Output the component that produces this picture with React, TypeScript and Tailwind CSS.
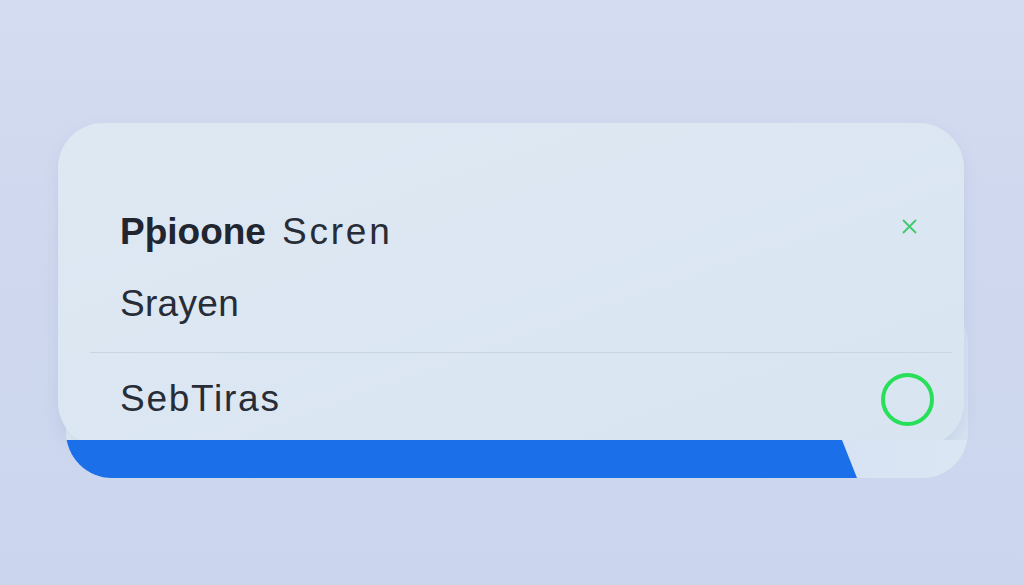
export default function App() {
  return (
    <div className="min-h-[585px] w-[1024px] bg-gradient-to-b from-[#d4dcf1] via-[#ced7ee] to-[#cbd6ee] pl-[58px] pt-[123px] font-['Liberation_Sans',Arial,sans-serif] text-[#272c36]">
      <div className="grid h-[355px] w-[910px]">
        {/* back layer with blue strip */}
        <div className="col-start-1 row-start-1 ml-[8px] flex h-[180px] w-[902px] flex-col justify-end self-end overflow-hidden rounded-[46px] bg-gradient-to-r from-[#e2ebf5] via-[#dbe6f2] to-[#d6e2f1]">
          <div className="relative h-[38px] w-full">
            <div className="h-full w-full bg-gradient-to-r from-[#bfd3ef] to-[#dbe6f3]" />
            <div className="absolute inset-0 bg-[#1b6fe9] [clip-path:polygon(0_0,776px_0,791px_100%,0_100%)]" />
          </div>
        </div>

        {/* front card */}
        <div className="col-start-1 row-start-1 flex h-[324px] w-[906px] flex-col self-start rounded-[45px] bg-gradient-to-br from-[#dee8f3] to-[#d8e5f1] pt-[87px] pb-[26px] shadow-[0_6px_14px_rgba(150,170,205,0.25)]">
          <div className="flex h-[44px] items-center justify-between pl-[62px] pr-[47px]">
            <div className="text-[37px] leading-[44px]">
              <span className="font-bold text-[#20252f]">Pþioone</span>
              <span className="ml-[16px] tracking-[2.8px]">Scren</span>
            </div>
            <svg width="15" height="15" viewBox="0 0 15 15" className="-mt-[12px]">
              <path d="M1.5 1.5 L13.5 13.5 M13.5 1.5 L1.5 13.5" stroke="#3ecb6c" strokeWidth="1.8" strokeLinecap="round" />
            </svg>
          </div>
          <div className="mt-[28px] h-[44px] pl-[62px] text-[37px] leading-[44px] tracking-[0.3px]">Srayen</div>
          <div className="ml-[32px] mt-[26px] h-px w-[862px] bg-[#cad5e2]" />
          <div className="mt-[24px] flex h-[44px] items-center justify-between pl-[62px] pr-[30px]">
            <span className="text-[37px] leading-[44px] tracking-[1.75px]">SebTiras</span>
            <div className="h-[53px] w-[53px] rounded-full border-[4px] border-[#27df58]" />
          </div>
        </div>
      </div>
    </div>
  );
}
